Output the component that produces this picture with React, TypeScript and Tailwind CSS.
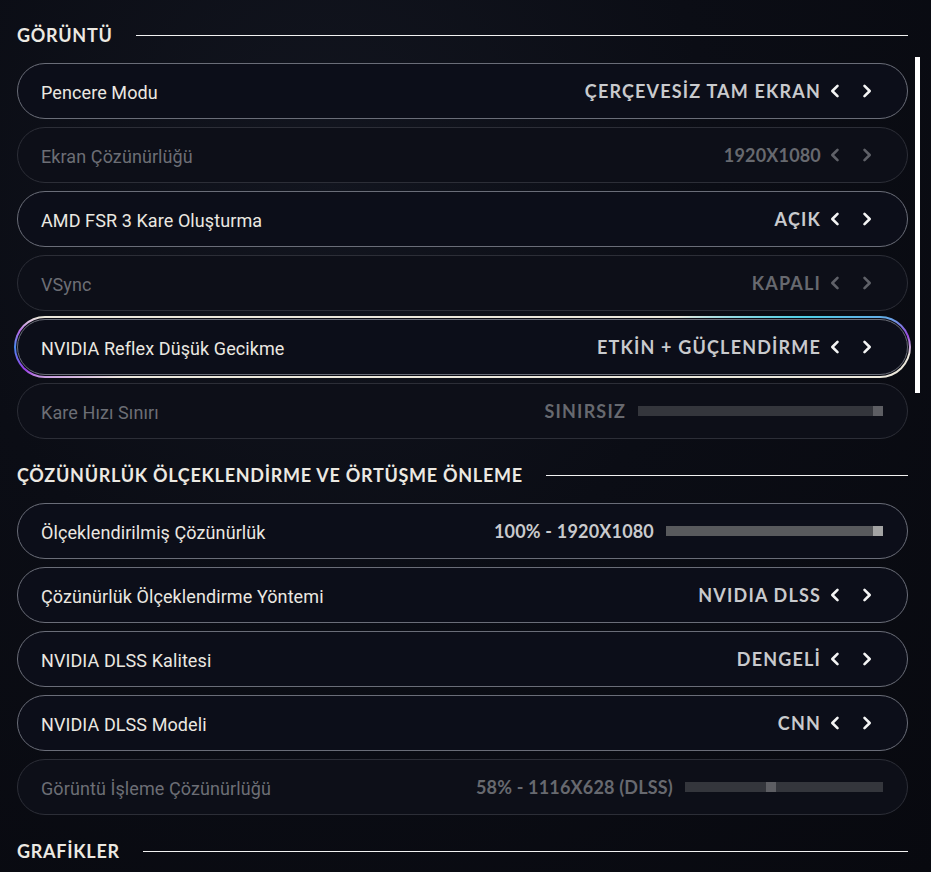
import React from "react";

type Row =
  | { kind: "select"; label: string; value: string; disabled?: boolean; focused?: boolean }
  | { kind: "slider"; label: string; value: string; disabled?: boolean; pos: number; trackLeft: number };

const display: Row[] = [
  { kind: "select", label: "Pencere Modu", value: "ÇERÇEVESİZ TAM EKRAN" },
  { kind: "select", label: "Ekran Çözünürlüğü", value: "1920X1080", disabled: true },
  { kind: "select", label: "AMD FSR 3 Kare Oluşturma", value: "AÇIK" },
  { kind: "select", label: "VSync", value: "KAPALI", disabled: true },
  { kind: "select", label: "NVIDIA Reflex Düşük Gecikme", value: "ETKİN + GÜÇLENDİRME", focused: true },
  { kind: "slider", label: "Kare Hızı Sınırı", value: "SINIRSIZ", disabled: true, pos: 1, trackLeft: 245 },
];

const scaling: Row[] = [
  { kind: "slider", label: "Ölçeklendirilmiş Çözünürlük", value: "100% - 1920X1080", pos: 1, trackLeft: 217 },
  { kind: "select", label: "Çözünürlük Ölçeklendirme Yöntemi", value: "NVIDIA DLSS" },
  { kind: "select", label: "NVIDIA DLSS Kalitesi", value: "DENGELİ" },
  { kind: "select", label: "NVIDIA DLSS Modeli", value: "CNN" },
  { kind: "slider", label: "Görüntü İşleme Çözünürlüğü", value: "58% - 1116X628 (DLSS)", disabled: true, pos: 0.43, trackLeft: 198 },
];

function Chevron({ dir }: { dir: "left" | "right" }) {
  return (
    <svg width="12" height="16" viewBox="0 0 12 16" fill="none" stroke="currentColor" strokeWidth={2.6} strokeLinecap="round" strokeLinejoin="round">
      {dir === "left" ? <path d="M8.5 2.8L3.3 8l5.2 5.2" /> : <path d="M3.5 2.8L8.7 8l-5.2 5.2" />}
    </svg>
  );
}

function Header({ title, first }: { title: string; first?: boolean }) {
  return (
    <div className={`flex items-center h-5 ${first ? "mt-[25px]" : "mt-[26px]"} mb-[18px]`}>
      <span className="font-['Lato',sans-serif] font-bold text-[18px] tracking-[0.04em] text-[#ece9e2] leading-none whitespace-nowrap">
        {title}
      </span>
      <div className="ml-[23px] flex-1 h-px bg-[#f2f2f2]" />
    </div>
  );
}

function SettingRow({ row }: { row: Row }) {
  const dis = row.disabled;
  const focused = row.kind === "select" && row.focused;
  const numeric = /\d/.test(row.value);
  const inner = (
    <div
      className={`relative z-10 flex items-center h-[56px] rounded-full border pl-[23px] pr-[34px] ${
        dis ? "border-[#2c2e37] bg-[#0d0f18]" : "border-[#6a6d78] bg-[#0c0e19]"
      }`}
    >
      <span
        className={`mt-[2px] font-['Roboto',sans-serif] text-[18px] tracking-[0.005em] ${
          dis ? "text-[#6c6e75]" : "text-[#ebe8e1]"
        }`}
      >
        {row.label}
      </span>
      <div className="flex-1" />
      <span
        className={`font-['Lato',sans-serif] font-bold text-[18px] whitespace-nowrap ${
          numeric ? "tracking-[0.01em]" : "tracking-[0.065em]"
        } ${dis ? "text-[#67696f]" : "text-[#c9cacd]"}`}
      >
        {row.value}
      </span>
      {row.kind === "select" ? (
        <div className={`flex items-center gap-5 ml-[8px] ${dis ? "text-[#5f6168]" : "text-[#f4f4f4]"}`}>
          <Chevron dir="left" />
          <Chevron dir="right" />
        </div>
      ) : (
        <div
          className={`relative ml-3 mr-[-10px] h-[10px] ${dis ? "bg-[#34363c]" : "bg-[#58595c]"}`}
          style={{ width: row.trackLeft }}
        >
          <div
            className={`absolute top-0 h-[10px] w-[10px] ${dis ? "bg-[#5d5e63]" : "bg-[#a3a3a3]"}`}
            style={{ left: `calc(${row.pos * 100}% - ${row.pos * 10}px)` }}
          />
        </div>
      )}
    </div>
  );
  if (!focused) return inner;
  return (
    <div className="relative">
      <div className="absolute -inset-[3px] rounded-full border-2 border-transparent [background:linear-gradient(#0b0c15,#0b0c15)_padding-box,conic-gradient(from_0deg,#ece8dc_0deg,#ece8dc_82deg,#4fd0e8_85deg,#9a4be0_88.5deg,#ece8dc_91deg,#ece8dc_265deg,#9b3fe6_267deg,#4a8cf0_270deg,#b56be8_272deg,#ece8dc_274deg,#ece8dc_360deg)_border-box]" />
      {inner}
    </div>
  );
}

export default function App() {
  return (
    <div className="w-[931px] h-[872px] overflow-hidden bg-[radial-gradient(ellipse_at_35%_20%,#12151f_0%,#0b0d15_45%,#08090f_100%)] flex">
      <div className="w-[891px] ml-[17px] shrink-0">
        <Header title="GÖRÜNTÜ" first />
        <div className="flex flex-col gap-2">
          {display.map((r) => (
            <SettingRow key={r.label} row={r} />
          ))}
        </div>
        <Header title="ÇÖZÜNÜRLÜK ÖLÇEKLENDİRME VE ÖRTÜŞME ÖNLEME" />
        <div className="flex flex-col gap-2">
          {scaling.map((r) => (
            <SettingRow key={r.label} row={r} />
          ))}
        </div>
        <Header title="GRAFİKLER" />
      </div>
      <div className="ml-[7px] mt-[57px] w-[5px] h-[336px] bg-white" />
    </div>
  );
}
